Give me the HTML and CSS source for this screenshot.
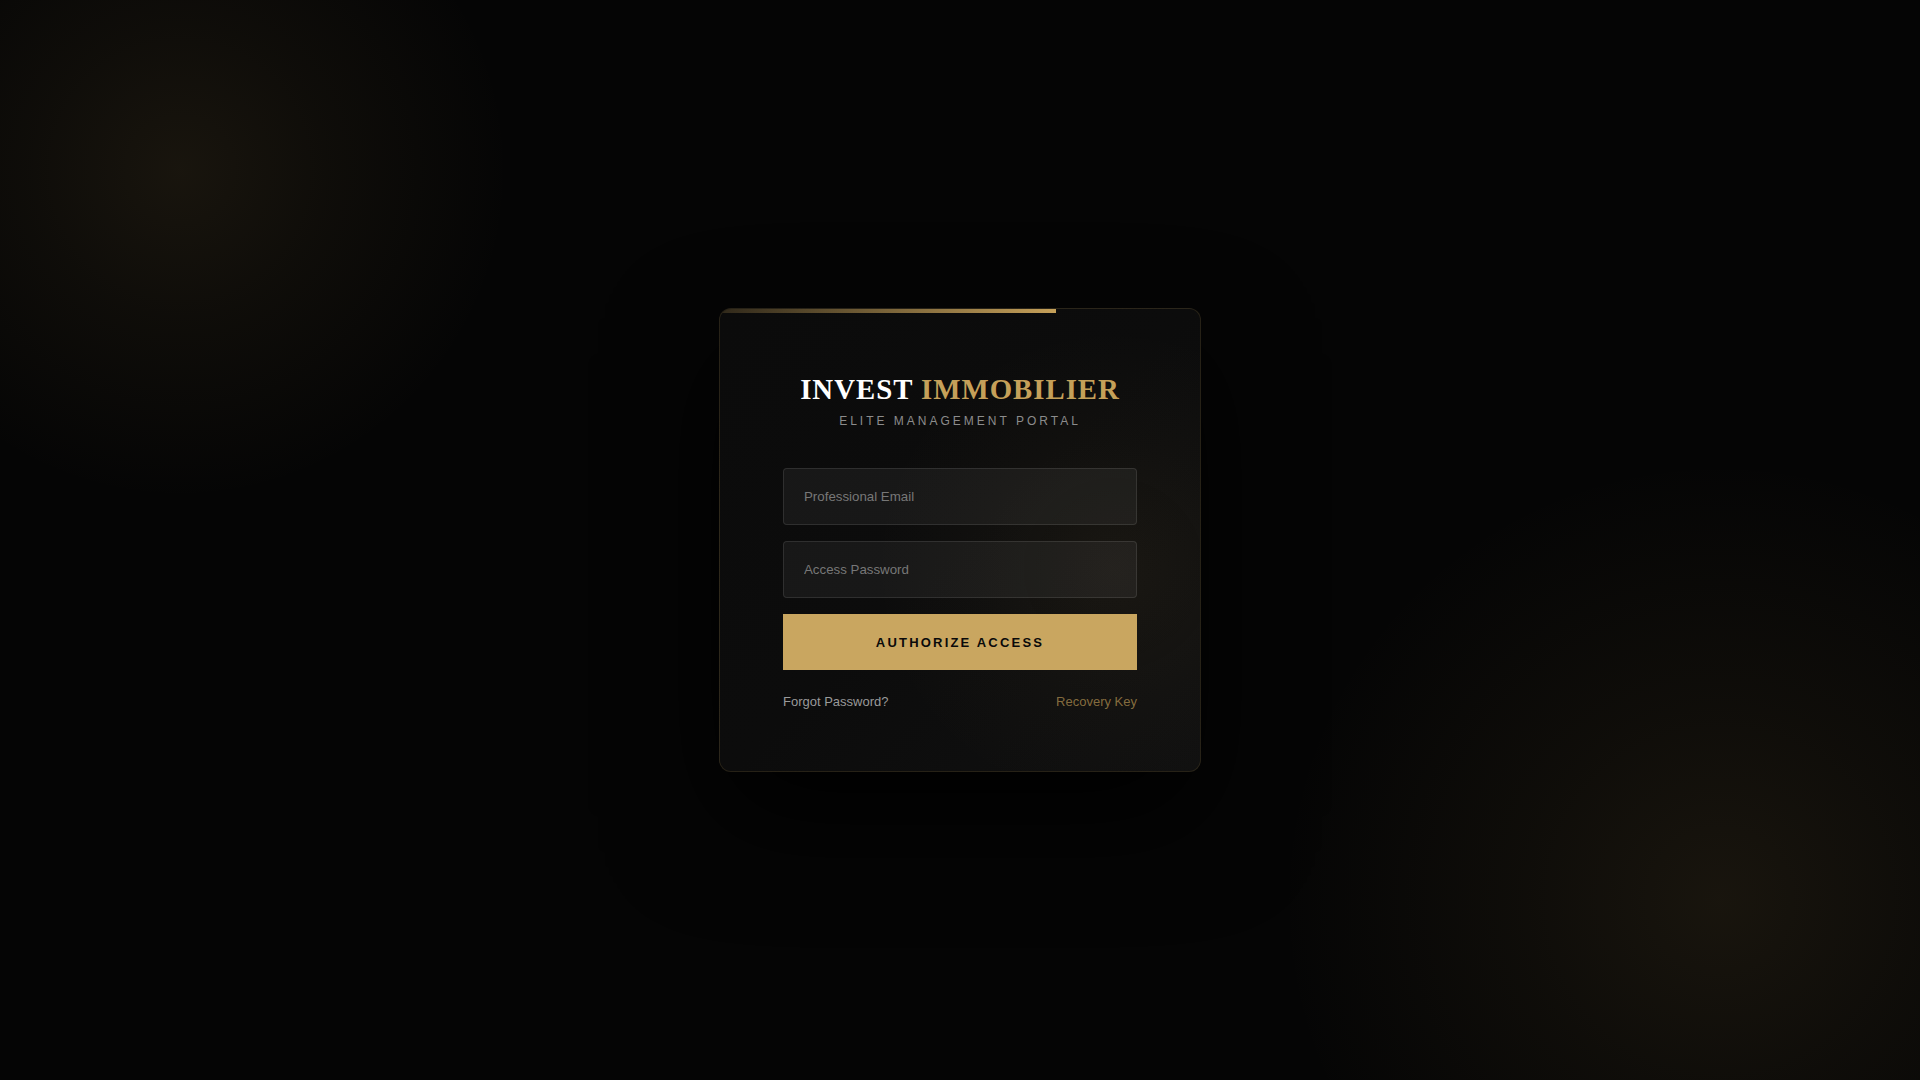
FILE: index.html
```html
<!DOCTYPE html>
<html lang="en">
<head>
<meta charset="utf-8">
<title>Invest Immobilier — Elite Management Portal</title>
<link rel="stylesheet" href="styles.css">
</head>
<body>
  <main class="card">
    <div class="card-bar"></div>
    <header class="brand">
      <h1 class="brand-title">INVEST <span class="brand-accent">IMMOBILIER</span></h1>
      <p class="brand-sub">ELITE MANAGEMENT PORTAL</p>
    </header>
    <form class="login-form">
      <input class="field" type="email" placeholder="Professional Email">
      <input class="field" type="password" placeholder="Access Password">
      <button class="submit" type="button">AUTHORIZE ACCESS</button>
    </form>
    <div class="links">
      <a class="link link-muted" href="#">Forgot Password?</a>
      <a class="link link-gold" href="#">Recovery Key</a>
    </div>
  </main>
</body>
</html>
```

FILE: styles.css
```css
* { box-sizing: border-box; }

html, body { height: 100%; }

body {
  margin: 0;
  min-height: 100vh;
  display: flex;
  align-items: center;
  justify-content: center;
  font-family: "Liberation Sans", Arial, sans-serif;
  background:
    radial-gradient(circle 330px at 180px 170px, rgba(197,160,89,0.10) 0%, rgba(197,160,89,0.05) 45%, rgba(197,160,89,0) 100%),
    radial-gradient(circle 440px at 1720px 900px, rgba(197,160,89,0.10) 0%, rgba(197,160,89,0.05) 45%, rgba(197,160,89,0) 100%),
    #050505;
}

.card {
  position: relative;
  width: 482px;
  padding: 64px 63px 62px;
  border: 1px solid rgba(197,160,89,0.15);
  border-radius: 12px;
  overflow: hidden;
  background:
    radial-gradient(circle 240px at 82% 56%, rgba(197,160,89,0.065) 0%, rgba(197,160,89,0.025) 55%, rgba(197,160,89,0) 100%),
    linear-gradient(135deg, #0b0b0b 0%, #0c0c0c 50%, #101010 100%);
  box-shadow: 0 45px 110px rgba(0,0,0,0.9), inset 0 0 24px rgba(255,255,255,0.012);
}

.card-bar {
  position: absolute;
  top: 0;
  left: 0;
  width: 70%;
  height: 4px;
  background: linear-gradient(90deg, rgba(197,160,89,0.2) 0%, #c5a059 100%);
}

.brand { text-align: center; }

.brand-title {
  margin: 0 0 8px;
  font-family: "Liberation Serif", "Times New Roman", serif;
  font-size: 28.8px;
  font-weight: 700;
  letter-spacing: 1px;
  line-height: normal;
  color: #ffffff;
}

.brand-accent { color: #c5a059; }

.brand-sub {
  margin: 0;
  font-size: 12px;
  letter-spacing: 3px;
  color: #8c8c8c;
  line-height: normal;
}

.login-form {
  margin-top: 40px;
  display: flex;
  flex-direction: column;
  gap: 16px;
}

.field {
  display: block;
  width: 100%;
  height: 57px;
  padding: 0 20px;
  background: rgba(255,255,255,0.05);
  border: 1px solid rgba(255,255,255,0.1);
  border-radius: 4px;
  font-family: "Liberation Sans", Arial, sans-serif;
  font-size: 13.3px;
  color: #dddddd;
  outline: none;
}

.field::placeholder { color: #777777; }

.submit {
  display: block;
  width: 100%;
  height: 56px;
  border: none;
  border-radius: 0;
  background: #c9a660;
  color: #0a0a0a;
  font-family: "Liberation Sans", Arial, sans-serif;
  font-size: 13px;
  font-weight: 700;
  letter-spacing: 2.2px;
  cursor: pointer;
}

.links {
  margin-top: 24px;
  display: flex;
  justify-content: space-between;
  font-size: 13px;
  line-height: normal;
}

.link { text-decoration: none; }
.link-muted { color: #9a9a9a; }
.link-gold { color: rgba(197,160,89,0.65); }
```
